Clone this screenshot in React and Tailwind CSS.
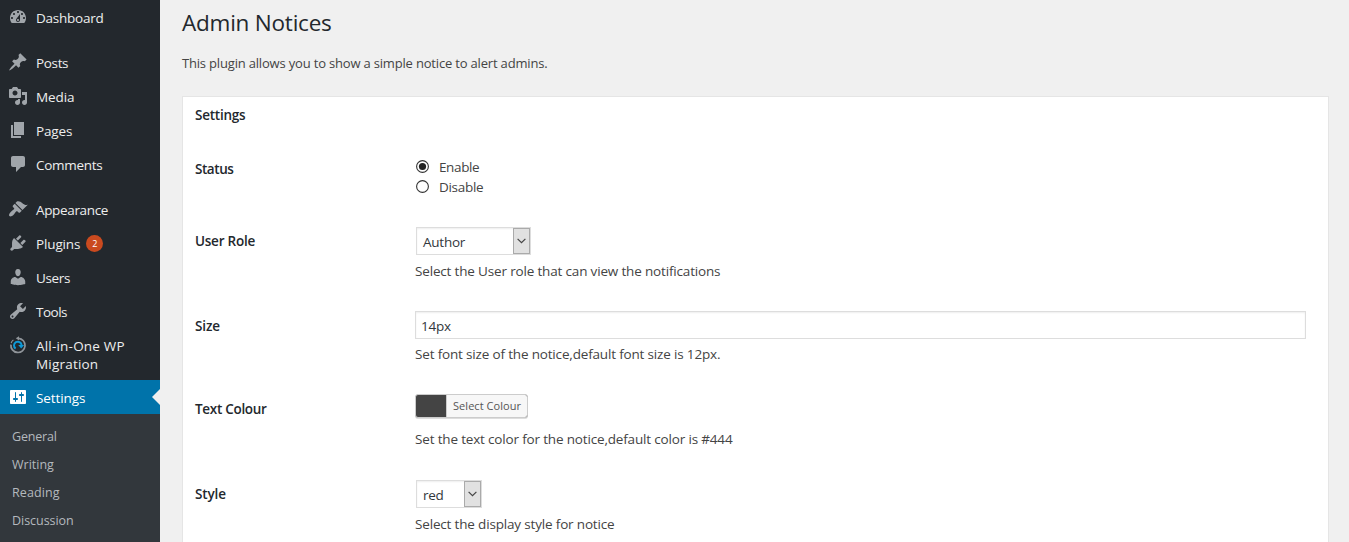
const icons = {
  dashboard:
    "M3.76 16h12.48c1.1-1.37 1.76-3.11 1.76-5 0-4.42-3.58-8-8-8s-8 3.58-8 8c0 1.89.66 3.63 1.76 5zM10 4c.55 0 1 .45 1 1s-.45 1-1 1-1-.45-1-1 .45-1 1-1zM6 6c.55 0 1 .45 1 1s-.45 1-1 1-1-.45-1-1 .45-1 1-1zm8 0c.55 0 1 .45 1 1s-.45 1-1 1-1-.45-1-1 .45-1 1-1zm-5.37 5.55L12 7v6c0 1.1-.9 2-2 2s-2-.9-2-2c0-.57.24-1.08.63-1.45zM4 10c.55 0 1 .45 1 1s-.45 1-1 1-1-.45-1-1 .45-1 1-1zm12 0c.55 0 1 .45 1 1s-.45 1-1 1-1-.45-1-1 .45-1 1-1zm-5 3c0-.55-.45-1-1-1s-1 .45-1 1 .45 1 1 1 1-.45 1-1z",
  post: "M10.44 3.02l1.82-1.82 6.36 6.35-1.83 1.82c-1.05-.68-2.48-.57-3.41.36l-.75.75c-.92.93-1.04 2.35-.35 3.41l-1.83 1.82-2.41-2.41-2.8 2.79c-.42.42-3.38 2.71-3.8 2.29s1.86-3.39 2.28-3.81l2.79-2.79L4.1 9.36l1.83-1.82c1.05.69 2.48.57 3.4-.36l.75-.75c.93-.92 1.05-2.35.36-3.41z",
  media:
    "M13 11V4c0-.55-.45-1-1-1h-1.67L9 1H5L3.67 3H2c-.55 0-1 .45-1 1v7c0 .55.45 1 1 1h10c.55 0 1-.45 1-1zM7 4.5c1.38 0 2.5 1.12 2.5 2.5S8.38 9.5 7 9.5 4.5 8.38 4.5 7 5.62 4.5 7 4.5zM14 6h5v10.5c0 1.38-1.12 2.5-2.5 2.5S14 17.88 14 16.5s1.12-2.5 2.5-2.5c.17 0 .34.02.5.05V9h-3V6zm-4 8.05V13h2v3.5c0 1.38-1.12 2.5-2.5 2.5S7 17.88 7 16.5 8.12 14 9.5 14c.17 0 .34.02.5.05z",
  page: "M6 15V2h10v13H6zm-1 1h8v2H3V5h2v11z",
  comments:
    "M5 2h10c1.1 0 2 .9 2 2v7c0 1.1-.9 2-2 2h-2l-5 5v-5H5c-1.1 0-2-.9-2-2V4c0-1.1.9-2 2-2z",
  appearance:
    "M14.48 11.06L7.41 3.99l1.5-1.5c.5-.56 2.3-.47 3.51.32 1.21.8 1.43 1.28 2.91 2.1 1.18.64 2.45 1.26 4.45.85zm-.71.71L6.7 4.7 4.93 6.47c-.39.39-.39 1.02 0 1.41l1.06 1.06c.39.39.39 1.03 0 1.42-.6.6-1.43 1.11-2.21 1.69-.35.26-.7.53-1.01.84C1.43 14.23.4 16.08 1.4 17.07c.99 1 2.84-.03 4.18-1.36.31-.31.58-.66.85-1.02.57-.78 1.08-1.61 1.69-2.21.39-.39 1.02-.39 1.41 0l1.06 1.06c.39.39 1.02.39 1.41 0z",
  plugins:
    "M13.11 4.36L9.87 7.6 8 5.73l3.24-3.24c.35-.34 1.05-.2 1.56.32.52.51.66 1.21.31 1.55zm-8 1.77l.91-1.12 9.01 9.01-1.19.84c-.71.71-2.63 1.16-3.82 1.16H6.14L4.9 17.26c-.59.59-1.54.59-2.12 0-.59-.58-.59-1.53 0-2.12l1.24-1.24v-3.88c0-1.13.4-3.19 1.09-3.89zm7.26 3.97l3.24-3.24c.34-.35 1.04-.21 1.55.31.52.51.66 1.21.31 1.55l-3.24 3.25z",
  users:
    "M10 9.25c-2.27 0-2.73-3.44-2.73-3.44C7 4.02 7.82 2 9.97 2c2.16 0 2.98 2.02 2.71 3.81 0 0-.41 3.44-2.68 3.44zm0 2.57L12.72 10c2.39 0 4.52 2.33 4.52 4.53v2.49s-3.65 1.13-7.24 1.13c-3.65 0-7.24-1.13-7.24-1.13v-2.49c0-2.25 1.94-4.48 4.47-4.48z",
  tools:
    "M16.68 9.77c-1.34 1.34-3.3 1.67-4.95.99l-5.41 6.52c-.99.99-2.59.99-3.58 0s-.99-2.59 0-3.57l6.52-5.42c-.68-1.65-.35-3.61.99-4.95 1.28-1.28 3.12-1.62 4.72-1.06l-2.89 2.89 2.82 2.82 2.86-2.87c.53 1.58.18 3.39-1.08 4.65zM3.81 16.21c.4.39 1.04.39 1.43 0 .4-.4.4-1.04 0-1.43-.39-.4-1.03-.4-1.43 0-.39.39-.39 1.03 0 1.43z",
  settings:
    "M18 16V4c0-.55-.45-1-1-1H3c-.55 0-1 .45-1 1v12c0 .55.45 1 1 1h14c.55 0 1-.45 1-1zM8 11h1c.55 0 1 .45 1 1s-.45 1-1 1H8v1.5c0 .28-.22.5-.5.5s-.5-.22-.5-.5V13H6c-.55 0-1-.45-1-1s.45-1 1-1h1V5.5c0-.28.22-.5.5-.5s.5.22.5.5V11zm5-2h-1c-.55 0-1-.45-1-1s.45-1 1-1h1V5.5c0-.28.22-.5.5-.5s.5.22.5.5V7h1c.55 0 1 .45 1 1s-.45 1-1 1h-1v5.5c0 .28-.22.5-.5.5s-.5-.22-.5-.5V9z",
};

function MigrationIcon() {
  return (
    <svg viewBox="0 0 20 20" className="h-5 w-5" fill="none">
      <path d="M10.5 3.3A7.1 7.1 0 1 1 2.9 9.6" stroke="#8f9499" strokeWidth="1.7" />
      <path d="M3.1 8.2A7.1 7.1 0 0 1 5.4 4.9" stroke="#8f9499" strokeWidth="1.1" />
      <path d="M11 1.2v4.2L7.8 3.2z" fill="#8f9499" />
      <path d="M7.6 13.6A3.8 3.8 0 1 1 13.6 10.2" stroke="#0e9ad8" strokeWidth="2" />
      <path d="M10.2 10h6l-3 3.4z" fill="#0e9ad8" />
    </svg>
  );
}

function MenuItem({ icon, label, tracking, active, gap, badge }) {
  return (
    <li
      className={`relative flex min-h-[34px] pl-2 ${gap ? "mt-[11px]" : ""} ${
        active ? "bg-[#0073aa] text-white" : "text-[#eeeeee]"
      }`}
    >
      <span className={`mt-[7px] h-5 w-5 shrink-0 ${active ? "text-white" : "text-[#a0a5aa]"}`}>
        {icon === "migration" ? (
          <MigrationIcon />
        ) : (
          <svg viewBox="0 0 20 20" className="h-5 w-5" fill="currentColor">
            <path d={icons[icon]} />
          </svg>
        )}
      </span>
      <span className={`ml-2 pt-[9px] pb-[7px] text-[13.5px] leading-[18px] whitespace-pre-line ${tracking}`}>
        {label}
      </span>
      {badge && (
        <span className="mt-[9px] ml-[6px] flex h-[17px] w-[17px] items-center justify-center rounded-full bg-[#ca4a1f] text-[9px] leading-none text-white">
          {badge}
        </span>
      )}
      {active && (
        <span className="absolute top-[9px] right-0 h-0 w-0 border-y-8 border-r-8 border-y-transparent border-r-[#f0f0f0]" />
      )}
    </li>
  );
}

const subItems = [
  ["General", "tracking-[-0.2px]"],
  ["Writing", "tracking-[0px]"],
  ["Reading", "tracking-[0.1px]"],
  ["Discussion", "tracking-[-0.04px]"],
];

function Sidebar() {
  return (
    <nav className="w-40 shrink-0 bg-[#23282d]">
      <ul>
        <MenuItem icon="dashboard" label="Dashboard" tracking="tracking-[-0.25px]" />
        <MenuItem icon="post" label="Posts" tracking="tracking-[-0.35px]" gap />
        <MenuItem icon="media" label="Media" tracking="tracking-[-0.1px]" />
        <MenuItem icon="page" label="Pages" tracking="tracking-[-0.15px]" />
        <MenuItem icon="comments" label="Comments" tracking="tracking-[-0.28px]" />
        <MenuItem icon="appearance" label="Appearance" tracking="tracking-[-0.35px]" gap />
        <MenuItem icon="plugins" label="Plugins" tracking="tracking-[-0.14px]" badge="2" />
        <MenuItem icon="users" label="Users" tracking="tracking-[-0.34px]" />
        <MenuItem icon="tools" label="Tools" tracking="tracking-[-0.5px]" />
        <MenuItem icon="migration" label={"All-in-One WP\nMigration"} tracking="tracking-[0.2px]" />
        <MenuItem icon="settings" label="Settings" tracking="tracking-[-0.1px]" active />
      </ul>
      <ul className="h-32 bg-[#32373c] pt-[9px] pl-3">
        {subItems.map(([label, tracking]) => (
          <li key={label} className={`h-7 text-[12.5px] leading-7 text-[#b4b9be] ${tracking}`}>
            {label}
          </li>
        ))}
      </ul>
    </nav>
  );
}

function Radio({ label, checked, tracking }) {
  return (
    <label className="flex h-5 items-start">
      <svg viewBox="0 0 13 13" className="mt-[3px] h-[13px] w-[13px]">
        <circle cx="6.5" cy="6.5" r="5.9" fill="#fff" stroke="#333" strokeWidth="1.1" />
        {checked && <circle cx="6.5" cy="6.5" r="3.6" fill="#222" />}
      </svg>
      <span className={`ml-[10px] text-[13.5px] leading-5 ${tracking}`}>{label}</span>
    </label>
  );
}

function Select({ value, width }) {
  return (
    <div
      className={`ml-px flex h-7 items-stretch border border-[#ddd] bg-white shadow-[inset_0_1px_2px_rgba(0,0,0,0.07)] ${width}`}
    >
      <span className="flex-1 pt-[3px] pl-[6px] text-[13.5px] leading-[22px] tracking-[-0.25px] text-[#32373c]">
        {value}
      </span>
      <span className="flex w-[17px] items-center justify-center border border-[#aaa] bg-[#e1e1e1]">
        <svg viewBox="0 0 9 6" className="h-[6px] w-[9px]" fill="none" stroke="#444" strokeWidth="1.2">
          <path d="M.6.8l3.9 3.9L8.4.8" />
        </svg>
      </span>
    </div>
  );
}

function Row({ label, tracking, height, labelTop, children }) {
  return (
    <div className={`flex ${height}`}>
      <div
        className={`w-[220px] shrink-0 text-[13.5px] leading-5 font-semibold text-[#23282d] ${labelTop} ${tracking}`}
      >
        {label}
      </div>
      <div className="min-w-0 flex-1">{children}</div>
    </div>
  );
}

function Description({ top, children }) {
  return <p className={`text-[13.5px] leading-5 tracking-[-0.168px] ${top}`}>{children}</p>;
}

export default function App() {
  return (
    <div className="flex h-[542px] overflow-hidden bg-[#f0f0f0] font-['Open_Sans','Noto_Sans',sans-serif] text-[#444]">
      <Sidebar />
      <main className="min-w-0 flex-1 pr-5 pl-[22px]">
        <h1 className="pt-2 text-[22.5px] leading-[29px] tracking-[-0.22px] text-[#23282d]">Admin Notices</h1>
        <p className="mt-4 text-[13px] leading-5 tracking-[-0.18px]">
          This plugin allows you to show a simple notice to alert admins.
        </p>
        <section className="mt-[23px] h-[500px] border border-[#e5e5e5] bg-white pt-2 pr-[22px] pl-3">
          <h2 className="mb-[30px] text-[13.5px] leading-5 font-semibold tracking-[-0.24px] text-[#23282d]">
            Settings
          </h2>
          <Row label="Status" height="h-[72px]" labelTop="pt-1" tracking="tracking-[-0.45px]">
            <div className="pt-[2px] pl-px">
              <Radio label="Enable" checked tracking="tracking-[-0.38px]" />
              <Radio label="Disable" tracking="tracking-[-0.3px]" />
            </div>
          </Row>
          <Row label="User Role" height="h-[84px]" labelTop="pt-1" tracking="tracking-[-0.24px]">
            <Select value="Author" width="w-[115px]" />
            <Description top="mt-[6px]">Select the User role that can view the notifications</Description>
          </Row>
          <Row label="Size" height="h-[83px]" labelTop="pt-[5px]" tracking="tracking-[-0.1px]">
            <div className="h-7 border border-[#ddd] pt-[3px] pl-[5px] text-[13.5px] leading-[22px] tracking-[-0.23px] text-[#32373c] shadow-[inset_0_1px_2px_rgba(0,0,0,0.07)]">
              14px
            </div>
            <Description top="mt-[5px]">Set font size of the notice,default font size is 12px.</Description>
          </Row>
          <Row label="Text Colour" height="h-[86px]" labelTop="pt-[5px]" tracking="tracking-[-0.3px]">
            <div className="flex h-6 w-[113px] overflow-hidden rounded-[3px] border border-[#ccc] bg-[#444] shadow-[0_1px_0_#ddd]">
              <span className="w-[30px] shrink-0" />
              <span className="flex-1 border-l border-[#ccc] bg-[#f7f7f7] pl-[6px] text-[11px] leading-[22px] tracking-[0.05px] text-[#555]">
                Select Colour
              </span>
            </div>
            <Description top="mt-[11px]">Set the text color for the notice,default color is #444</Description>
          </Row>
          <Row label="Style" height="h-[80px]" labelTop="pt-1" tracking="tracking-[-0.15px]">
            <Select value="red" width="w-[66px]" />
            <Description top="mt-[6px]">Select the display style for notice</Description>
          </Row>
        </section>
      </main>
    </div>
  );
}
